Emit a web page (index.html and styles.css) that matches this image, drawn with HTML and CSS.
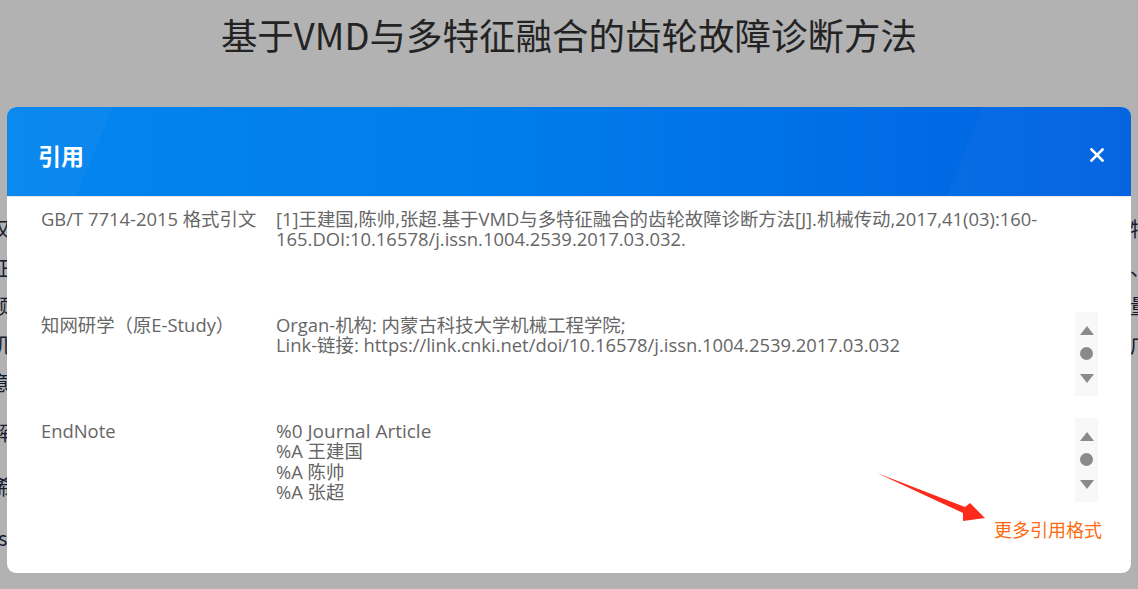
FILE: index.html
```html
<!DOCTYPE html>
<html lang="zh-CN">
<head>
<meta charset="utf-8">
<title>引用</title>
<link rel="stylesheet" href="styles.css">
</head>
<body>
<div class="page">
  <h1 class="page-title">基于VMD与多特征融合的齿轮故障诊断方法</h1>
  <div class="article">
    <p>汉针对齿轮故障振动信号的非平稳非线性特点以及单一特征难以全面表征齿轮运行状态的问题，提出了一种基于变分模态分解与多特征融合的齿轮故障诊断方法。首先利用变分模态分解将齿轮振动信号分解为若干个本征模态分量，然后分别提取各分量的时域特征、频域特征以及能量熵特征，构造多域融合特征向量，再采用主成分分析对高维特征进行降维处理，最后将降维后的特征输入支持向量机进行故障模式识别。实验结果表明，该方法能够有效识别齿轮的不同故障类型，诊断准确率较高，具有一定的工程应用价值与推广意义。</p>
    <p class="short p1">解齿轮；变分模态分解；多特征融合；故障诊断</p>
    <p class="short p2">稀基金资助：内蒙古自治区自然科学基金项目</p>
    <p class="short p3">s</p>
  </div>
</div>
<div class="mask"></div>
<div class="modal">
  <div class="modal-head">
    <h2 class="modal-title">引用</h2>
    <button class="close" type="button" aria-label="关闭">
      <svg width="14" height="14" viewBox="0 0 14 14"><path d="M1.5 1.5 L12.5 12.5 M12.5 1.5 L1.5 12.5" stroke="#fff" stroke-width="2.6" stroke-linecap="square" fill="none"/></svg>
    </button>
  </div>
  <div class="modal-body">
    <div class="row">
      <div class="label">GB/T 7714-2015 格式引文</div>
      <div class="content">[1]王建国,陈帅,张超.基于VMD与多特征融合的齿轮故障诊断方法[J].机械传动,2017,41(03):160-165.DOI:10.16578/j.issn.1004.2539.2017.03.032.</div>
    </div>
    <div class="row">
      <div class="label">知网研学（原E-Study）</div>
      <div class="content">Organ-机构: 内蒙古科技大学机械工程学院;<br>Link-链接: https://link.cnki.net/doi/10.16578/j.issn.1004.2539.2017.03.032</div>
      <div class="scroller"><span class="tri-up"></span><span class="dot"></span><span class="tri-down"></span></div>
    </div>
    <div class="row">
      <div class="label">EndNote</div>
      <div class="content"><span class="big">%0 Journal Article</span><br>%A 王建国<br>%A 陈帅<br>%A 张超<br>%T 基于VMD与多特征融合的齿轮故障诊断方法<br>%J 机械传动</div>
      <div class="scroller"><span class="tri-up"></span><span class="dot"></span><span class="tri-down"></span></div>
    </div>
    <div class="more"><a class="more-link" href="#">更多引用格式</a></div>
  </div>
  <svg class="arrow" width="120" height="54" viewBox="0 0 120 54"><polygon points="2,2 90,36 95,32 110,47 88,50 88,42" fill="#fe2a1c"/></svg>
</div>
</body>
</html>
```
FILE: styles.css
```css
html, body {
  margin: 0;
  padding: 0;
}
body {
  width: 1138px;
  height: 589px;
  overflow: hidden;
  background: #fff;
  font-family: "Open Sans", "Noto Sans CJK SC", sans-serif;
  position: relative;
}
.page {
  width: 1138px;
}
.page-title {
  margin: 0;
  padding-top: 11px;
  text-align: center;
  font-family: "Noto Sans CJK SC", sans-serif;
  font-size: 36.5px;
  line-height: 48px;
  font-weight: 400;
  color: #333;
}
.article {
  margin: 151px 0 0 -10px;
  width: 1170px;
  color: #1e2a44;
  font-family: "Noto Sans CJK SC", sans-serif;
  font-size: 20px;
  line-height: 38.5px;
}
.article p {
  margin: 0;
}
.article .p1 {
  margin-top: 11px;
}
.article .p2 {
  margin-top: 16px;
}
.article .p3 {
  margin-top: 12px;
  padding-left: 8px;
}
.mask {
  position: fixed;
  inset: 0;
  background: rgba(0, 0, 0, 0.3);
}
.modal {
  position: fixed;
  left: 7px;
  top: 107px;
  width: 1124px;
  height: 466px;
  background: #fff;
  border-radius: 9px;
  overflow: hidden;
}
.modal-head {
  height: 90px;
  display: flex;
  align-items: center;
  justify-content: space-between;
  padding: 6px 27px 0 31px;
  box-sizing: border-box;
  background:
    linear-gradient(112deg, rgba(255,255,255,0.03) 0 9%, rgba(255,255,255,0) 9.2%),
    linear-gradient(112deg, rgba(0,0,0,0) 0 84%, rgba(255,255,255,0.025) 84.2%),
    linear-gradient(90deg, #0485ee 0%, #007eec 40%, #006ee6 75%, #0061e0 100%);
  border-bottom: 1px solid #e6e6e6;
}
.modal-title {
  margin: 0;
  color: #fff;
  font-family: "Noto Sans CJK SC", sans-serif;
  font-size: 23px;
  font-weight: 700;
}
.close {
  background: none;
  border: 0;
  padding: 0;
  width: 14px;
  height: 14px;
  cursor: pointer;
  display: flex;
}
.modal-body {
  padding: 9px 33px 0 34px;
}
.row {
  display: grid;
  grid-template-columns: 235px 1fr 23px;
  height: 84px;
  margin-bottom: 22px;
}
.row:nth-child(3) {
  margin-bottom: 16px;
}
.label, .content {
  font-size: 18.4px;
  line-height: 20.3px;
  color: #666;
  padding-top: 3px;
  overflow: hidden;
}
.content {
  margin-right: 15px;
  word-break: break-word;
}
.content .big {
  font-size: 19px;
}
.scroller {
  background: #f8f8f8;
  display: flex;
  flex-direction: column;
  align-items: center;
  padding-top: 14px;
  box-sizing: border-box;
}
.tri-up {
  width: 0;
  height: 0;
  border-left: 7px solid transparent;
  border-right: 7px solid transparent;
  border-bottom: 9px solid #8a8a8a;
}
.dot {
  width: 13px;
  height: 13px;
  border-radius: 50%;
  background: #8a8a8a;
  margin-top: 12px;
}
.tri-down {
  width: 0;
  height: 0;
  border-left: 7px solid transparent;
  border-right: 7px solid transparent;
  border-top: 9px solid #8a8a8a;
  margin-top: 14px;
}
.more {
  text-align: right;
  margin-right: -4px;
  line-height: 22px;
}
.more-link {
  color: #ff6a0d;
  font-family: "Noto Sans CJK SC", sans-serif;
  font-size: 18px;
  text-decoration: none;
}
.arrow {
  position: absolute;
  left: 868px;
  top: 364px;
}
```
